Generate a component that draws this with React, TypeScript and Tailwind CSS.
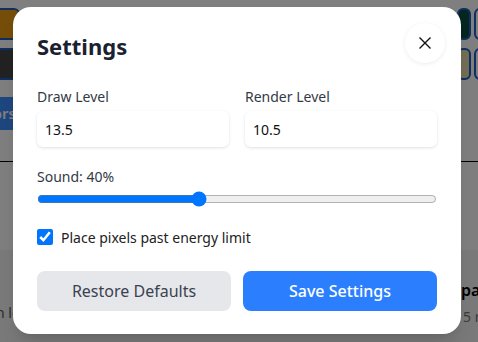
import { useState } from "react";

// 설정 모달 (배경 페이지 위에 떠 있음)
export default function App() {
  const [drawLevel, setDrawLevel] = useState("13.5");
  const [renderLevel, setRenderLevel] = useState("10.5");
  const [sound, setSound] = useState(40);
  const [pastLimit, setPastLimit] = useState(true);

  return (
    <div
      className="relative w-[478px] h-[342px] overflow-hidden bg-white"
      style={{ fontFamily: '"Noto Sans", "Open Sans", sans-serif' }}
    >
      {/* 뒤에 깔린 페이지 */}
      <div className="flex flex-col h-full">
        <div className="flex justify-between pt-[8px]">
          <div className="flex flex-col gap-2 -ml-4">
            <div className="w-[36px] h-[32px] rounded-md bg-[#e89a10] border-2 border-[#1e5fc4]" />
            <div className="w-[36px] h-[32px] rounded-md bg-[#444] border-2 border-[#1e5fc4]" />
          </div>
          <div className="flex gap-[3px] -mr-4">
            <div className="flex flex-col gap-2">
              <div className="w-[14px] h-[32px] rounded-md bg-[#0b4a3e] border-2 border-[#1e5fc4]" />
              <div className="w-[14px] h-[32px] rounded-md bg-[#e8dcb0] border-2 border-[#1e5fc4]" />
            </div>
            <div className="flex flex-col gap-2">
              <div className="w-[20px] h-[32px] rounded-md bg-white border-2 border-[#1e5fc4]" />
              <div className="w-[20px] h-[32px] rounded-md bg-white border-2 border-[#1e5fc4]" />
            </div>
          </div>
        </div>
        <div className="mt-[17px] w-[60px] h-[33px] bg-[#3d8cff] text-white text-[15px] font-semibold flex items-center justify-end pr-1 -ml-10">
          Colors
        </div>
        <div className="mt-[31px] border-b border-black" />
        <div className="flex-1" />
        <div className="h-[92px] bg-[#f5f5f5] flex justify-between items-start pt-[28px]">
          <div className="text-[14px] text-[#555] mt-[24px] -ml-1">n lo</div>
          <div className="flex flex-col items-start w-[17px] whitespace-nowrap">
            <span className="text-[16px] font-semibold text-black">pay</span>
            <span className="text-[14px] text-[#777] mt-1 ml-[2px]">5 r</span>
          </div>
        </div>
      </div>

      {/* 어두운 오버레이 + 모달 */}
      <div className="absolute inset-0 bg-black/50 pt-[7px] pl-[13px]">
        <div className="w-[448px] h-[327px] bg-white rounded-[18px] shadow-xl flex flex-col">
          <div className="flex items-center justify-between pl-6 pr-4 pt-4">
            <h2 className="text-[22px] font-bold text-[#1a2130] mt-[6px]">Settings</h2>
            <button className="w-10 h-10 rounded-full bg-white shadow-[0_1px_4px_rgba(0,0,0,0.08)] flex items-center justify-center">
              <svg width="14" height="14" viewBox="0 0 14 14" fill="none" stroke="#111" strokeWidth="1.4">
                <path d="M1.5 1.5l11 11M12.5 1.5l-11 11" />
              </svg>
            </button>
          </div>

          <div className="px-6 mt-[24px] flex flex-col">
            <div className="grid grid-cols-2 gap-4">
              <label className="flex flex-col gap-1">
                <span className="text-[14px] leading-5 text-[#333a45]">Draw Level</span>
                <input
                  value={drawLevel}
                  onChange={(e) => setDrawLevel(e.target.value)}
                  className="h-9 w-full rounded-md bg-white px-2 text-[14px] text-[#111] shadow-[0_1px_3px_rgba(0,0,0,0.12)] outline-none"
                />
              </label>
              <label className="flex flex-col gap-1">
                <span className="text-[14px] leading-5 text-[#333a45]">Render Level</span>
                <input
                  value={renderLevel}
                  onChange={(e) => setRenderLevel(e.target.value)}
                  className="h-9 w-full rounded-md bg-white px-2 text-[14px] text-[#111] shadow-[0_1px_3px_rgba(0,0,0,0.12)] outline-none"
                />
              </label>
            </div>

            <div className="mt-5 flex flex-col gap-1">
              <span className="text-[14px] leading-5 text-[#333a45]">Sound: {sound}%</span>
              <input
                type="range"
                min={0}
                max={100}
                value={sound}
                onChange={(e) => setSound(Number(e.target.value))}
                className="w-full h-4 m-0"
              />
            </div>

            <label className="mt-5 flex items-center gap-2 h-5">
              <input
                type="checkbox"
                checked={pastLimit}
                onChange={(e) => setPastLimit(e.target.checked)}
                className="w-4 h-4 m-0"
              />
              <span className="text-[14px] text-[#222]">Place pixels past energy limit</span>
            </label>

            <div className="mt-6 grid grid-cols-2 gap-3">
              <button className="h-10 rounded-lg bg-[#e5e7eb] text-[16px] text-[#3a4150]">
                Restore Defaults
              </button>
              <button className="h-10 rounded-lg bg-[#2b7fff] text-[16px] font-medium text-white">
                Save Settings
              </button>
            </div>
          </div>
        </div>
      </div>
    </div>
  );
}
